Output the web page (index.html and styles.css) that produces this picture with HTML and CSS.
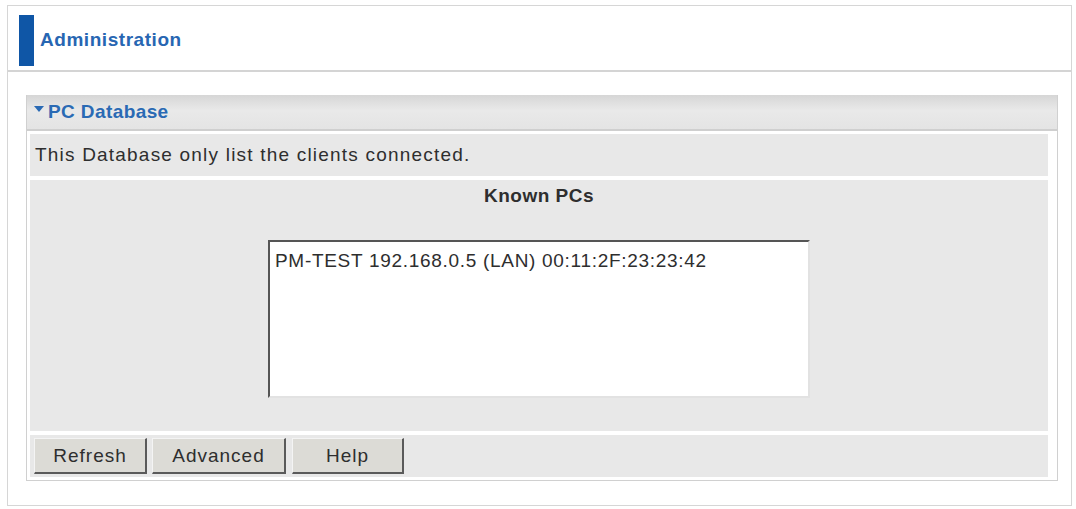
FILE: index.html
```html
<!DOCTYPE html>
<html>
<head>
<meta charset="utf-8">
<link rel="stylesheet" href="styles.css">
</head>
<body>
<div class="page">
  <div class="header">
    <div class="bar"></div>
    <div class="title">Administration</div>
  </div>
  <div class="panel">
    <div class="panel-head"><span class="tri"></span>PC Database</div>
    <div class="row desc">This Database only list the clients connected.</div>
    <div class="row known">
      <div class="known-title">Known PCs</div>
      <div class="listbox">PM-TEST 192.168.0.5 (LAN) 00:11:2F:23:23:42</div>
    </div>
    <div class="row buttons">
      <button class="btn btn-refresh">Refresh</button>
      <button class="btn btn-adv">Advanced</button>
      <button class="btn btn-help">Help</button>
    </div>
  </div>
</div>
</body>
</html>
```

FILE: styles.css
```css
html, body {
  margin: 0;
  padding: 0;
  background: #ffffff;
  font-family: "Liberation Sans", Arial, sans-serif;
}
.page {
  margin: 5px 0 0 7px;
  width: 1063px;
  height: 499px;
  border: 1px solid #d6d6d6;
  box-sizing: content-box;
}
.header {
  height: 64px;
  border-bottom: 2px solid #d4d4d4;
  display: flex;
  align-items: flex-start;
}
.bar {
  margin: 9px 0 0 11px;
  width: 15px;
  height: 51px;
  background: #0f56a6;
}
.title {
  margin: 23px 0 0 6px;
  font-size: 19px;
  font-weight: bold;
  letter-spacing: 0.55px;
  color: #2766b2;
}
.panel {
  margin: 23px 0 0 18px;
  width: 1024px;
  border: 1px solid #d0d0d0;
  border-top: none;
  background: #ffffff;
  padding: 0 3px 3px 3px;
  box-sizing: content-box;
}
.panel-head {
  margin: 0 -3px;
  height: 36px;
  background: linear-gradient(#d6d6d6, #e9e9e9 45%, #e4e4e4);
  border-bottom: 2px solid #cfcfcf;
  box-sizing: border-box;
  display: flex;
  align-items: center;
  padding-left: 6px;
  font-size: 19px;
  font-weight: bold;
  letter-spacing: 0.4px;
  color: #2a6ab4;
}
.tri {
  width: 0;
  height: 0;
  border-left: 5px solid transparent;
  border-right: 5px solid transparent;
  border-top: 6px solid #2a6ab4;
  margin: 0 4px 6px 1px;
}
.row {
  background: #e8e8e8;
  margin-top: 3px;
  width: 1018px;
}
.desc {
  height: 42px;
  font-size: 19px;
  letter-spacing: 1.2px;
  color: #2e2e2e;
  padding-left: 5px;
  box-sizing: border-box;
  display: flex;
  align-items: center;
  margin-top: 3px;
}
.known {
  height: 251px;
  margin-top: 4px;
  display: flex;
  flex-direction: column;
  align-items: center;
}
.known-title {
  margin-top: 5px;
  font-size: 19px;
  font-weight: bold;
  letter-spacing: 0.5px;
  color: #2e2e2e;
}
.listbox {
  margin-top: 33px;
  width: 542px;
  height: 158px;
  box-sizing: border-box;
  background: #ffffff;
  border-top: 2px solid #555555;
  border-left: 2px solid #555555;
  border-right: 2px solid #e2e2e2;
  border-bottom: 2px solid #e2e2e2;
  padding: 8px 5px;
  font-size: 19px;
  letter-spacing: 0.7px;
  color: #2e2e2e;
}
.buttons {
  height: 42px;
  margin-top: 4px;
  display: flex;
  align-items: center;
  padding-left: 4px;
  box-sizing: border-box;
}
.btn {
  height: 36px;
  box-sizing: border-box;
  background: #dcdbd6;
  border-top: 1px solid #f4f4f4;
  border-left: 1px solid #f4f4f4;
  border-right: 2px solid #5a5a5a;
  border-bottom: 2px solid #5a5a5a;
  font-family: "Liberation Sans", Arial, sans-serif;
  font-size: 19px;
  letter-spacing: 1px;
  color: #2e2e2e;
  padding: 0;
  margin-right: 5px;
}
.btn-refresh { width: 113px; }
.btn-adv { width: 134px; margin-right: 6px; }
.btn-help { width: 112px; }
```
